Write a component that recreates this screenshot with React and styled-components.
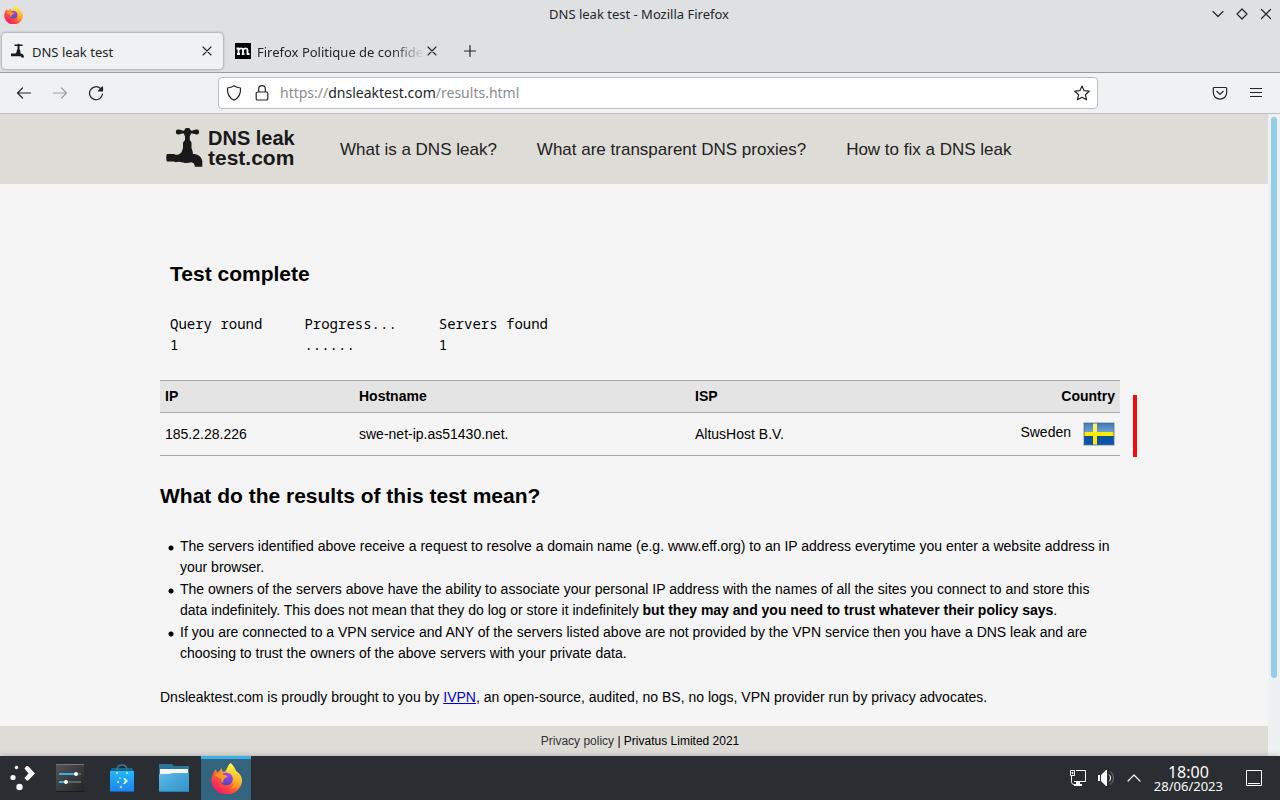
import React from "react";
import styled, { createGlobalStyle } from "styled-components";

const Global = createGlobalStyle`
  *, *::before, *::after { box-sizing: border-box; }
  html, body { margin: 0; padding: 0; }
  body { background: #f5f5f5; }
  button { font: inherit; color: inherit; background: none; border: 0; padding: 0; cursor: pointer; }
  svg { display: block; flex: none; }
`;

const Screen = styled.div`
  min-height: 100vh;
  display: flex;
  flex-direction: column;
  font-family: "Noto Sans", sans-serif;
  color: #232629;
`;

const TitleBar = styled.header`
  height: 29px;
  padding: 0 6px 1px 4px;
  display: grid;
  grid-template-columns: 1fr auto 1fr;
  align-items: center;
  background: #dee0e2;
  font-size: 13px;
`;

const WindowTitle = styled.span`
  line-height: 20px;
`;

const WindowControls = styled.div`
  display: flex;
  justify-content: flex-end;
  gap: 8px;
`;

const IconButton = styled.button`
  width: ${(p) => p.$size || 16}px;
  height: ${(p) => p.$size || 16}px;
  flex: none;
  display: flex;
  align-items: center;
  justify-content: center;
  opacity: ${(p) => (p.disabled ? 0.4 : 1)};
`;

const TabStrip = styled.div`
  height: 44px;
  padding: 4px 2px 3px;
  display: flex;
  align-items: stretch;
  gap: 4px;
  background: #dee0e2;
  border-bottom: 1px solid #9b9d9f;
`;

const Tab = styled.div`
  display: flex;
  align-items: center;
  width: 221px;
  padding: 0 8px;
  font-size: 13px;
  border-radius: 4px;
  background: ${(p) => (p.$active ? "#f0f1f3" : "transparent")};
  box-shadow: ${(p) => (p.$active ? "0 0 3px rgba(0, 0, 0, 0.45)" : "none")};
`;

const TabLabel = styled.span`
  flex: 1;
  min-width: 0;
  margin-left: 6px;
  padding-top: 2px;
  overflow: hidden;
  white-space: nowrap;
  line-height: 20px;
  mask-image: ${(p) => (p.$fade ? "linear-gradient(to left, transparent, #000 32px)" : "none")};
`;

const Toolbar = styled.div`
  height: 41px;
  padding: 4px 12px;
  display: flex;
  align-items: center;
  background: #f0f1f3;
  border-bottom: 1px solid #bfc0c1;
`;

const NavButtons = styled.div`
  display: flex;
  gap: 12px;
  width: 206px;
`;

const UrlBar = styled.div`
  flex: 1;
  height: 32px;
  display: flex;
  align-items: center;
  gap: 10px;
  padding: 0 7px;
  background: #fff;
  border: 1px solid #bbbdbf;
  border-radius: 4px;
`;

const SiteIdentity = styled.div`
  display: flex;
  gap: 12px;
`;

const UrlText = styled.span`
  flex: 1;
  font-size: 14px;
  line-height: 20px;
  color: #8b8d8f;
  b { font-weight: 400; color: #232629; }
`;

const ToolbarEnd = styled.div`
  width: 170px;
  display: flex;
  justify-content: flex-end;
  gap: 12px;
`;

const Page = styled.div`
  position: relative;
  flex: 1;
  display: flex;
  flex-direction: column;
  background: #f5f5f5;
  color: #000;
  font-family: "Liberation Sans", Arial, sans-serif;
  font-size: 14px;
  line-height: 21px;
`;

const ScrollTrack = styled.div`
  position: absolute;
  top: 0;
  right: 0;
  bottom: 0;
  width: 12px;
  padding: 3px 3px 78px;
  background: #eff0f2;
`;

const ScrollThumb = styled.div`
  height: 100%;
  border-radius: 3px;
  background: #93cee9;
`;

const SiteHeader = styled.header`
  background: #dddcd7;
`;

const Container = styled.div`
  width: 100%;
  max-width: 960px;
  margin: 0 auto;
`;

const SiteNav = styled(Container)`
  height: 70px;
  display: flex;
  align-items: center;
`;

const Logo = styled.a`
  width: 180px;
  padding: 0 0 2px 6px;
  display: flex;
  gap: 5px;
  color: #191919;
  font-weight: 700;
  text-decoration: none;
`;

const LogoText = styled.span`
  display: flex;
  flex-direction: column;
  line-height: 20px;
`;

const LogoLine = styled.span`
  font-size: ${(p) => p.$size}px;
`;

const NavLinks = styled.nav`
  display: flex;
  gap: 40px;
`;

const NavLink = styled.a`
  font-size: 17px;
  line-height: 26px;
  padding-top: 2px;
  color: #222;
  text-decoration: none;
`;

const Main = styled.main`
  flex: 1;
  padding: 76px 0 18px;
`;

const Heading = styled.h2`
  margin: 0;
  font-size: 21px;
  line-height: 28px;
`;

const SectionHeading = styled(Heading)`
  margin-top: 26px;
`;

const Progress = styled.section`
  padding: 0 10px;
`;

const ProgressTable = styled.table`
  margin: 25px 0;
  border-collapse: collapse;
  font-family: "Noto Sans Mono", "DejaVu Sans Mono", monospace;
  font-size: 14px;
  line-height: 21px;
  th, td { padding: 0 42px 0 0; font-weight: 400; text-align: left; }
`;

const ResultsWrap = styled.div`
  position: relative;
`;

const ResultMark = styled.div`
  position: absolute;
  top: 15px;
  bottom: -1px;
  right: -17px;
  width: 4px;
  background: #f40a0a;
`;

const Results = styled.table`
  width: 100%;
  table-layout: fixed;
  border-collapse: collapse;
  th, td { padding: 5px; text-align: left; border-bottom: 1px solid #a9a9a9; }
  th { height: 32px; background: #e4e4e4; border-top: 1px solid #a9a9a9; }
  td { height: 43px; }
  th:last-child { text-align: right; }
`;

const Col = styled.col`
  width: ${(p) => p.$width};
`;

const Country = styled.div`
  display: flex;
  justify-content: flex-end;
  align-items: center;
  gap: 12px;
  span { padding-bottom: 3px; }
`;

const Notes = styled.ul`
  margin: 26px 0 23px;
  padding: 0 10px 0 0;
  list-style: none;
`;

const Note = styled.li`
  padding-left: 20px;
  background: radial-gradient(circle at 11px 12px, #000 2px, transparent 3px) no-repeat;
  & + & { margin-top: 1px; }
`;

const Text = styled.p`
  margin: 0;
  a { color: #0000d8; }
`;

const SiteFooter = styled.footer`
  height: 30px;
  background: #dddcd7;
  font-size: 12px;
  line-height: 30px;
  text-align: center;
  a { color: #333; text-decoration: none; }
`;

const TaskBar = styled.footer`
  height: 44px;
  display: flex;
  align-items: stretch;
  justify-content: space-between;
  background: #2a2e32;
  color: #fcfcfc;
  box-shadow: 0 0 6px rgba(0, 0, 0, 0.25);
  z-index: 1;
`;

const Launchers = styled.div`
  display: flex;
  gap: 2px;
`;

const Launcher = styled.button`
  width: ${(p) => (p.$first ? 43 : 50)}px;
  display: flex;
  align-items: center;
  justify-content: center;
  background: ${(p) => (p.$active ? "#33657f" : "transparent")};
  box-shadow: ${(p) => (p.$active ? "inset 0 3px #3daee9" : "none")};
`;

const Tray = styled.div`
  display: flex;
  align-items: center;
  gap: 12px;
  padding-right: 18px;
`;

const Clock = styled.div`
  display: flex;
  flex-direction: column;
  align-items: center;
  margin-right: 11px;
  padding-top: 2px;
  line-height: 14px;
  font-size: 13px;
`;

const ClockTime = styled.time`
  font-size: 16px;
`;

const Stroke = ({ size = 16, w = 1.2, children }) => (
  <svg width={size} height={size} viewBox="0 0 16 16" fill="none" stroke="currentColor" strokeWidth={w} strokeLinecap="round" strokeLinejoin="round" aria-hidden="true">
    {children}
  </svg>
);

const Firefox = ({ size, id }) => (
  <svg width={size} height={size} viewBox="0 0 32 32" aria-hidden="true">
    <defs>
      <linearGradient id={id + "a"} x1="0.85" y1="0.1" x2="0.2" y2="0.95">
        <stop offset="0" stopColor="#fff44f" />
        <stop offset="0.35" stopColor="#ffb13b" />
        <stop offset="0.6" stopColor="#ff5a36" />
        <stop offset="1" stopColor="#f5156c" />
      </linearGradient>
      <radialGradient id={id + "b"} cx="0.6" cy="0.2" r="0.8">
        <stop offset="0" stopColor="#a545f2" />
        <stop offset="1" stopColor="#5247bd" />
      </radialGradient>
      <linearGradient id={id + "c"} x1="0.5" y1="0" x2="0.6" y2="1">
        <stop offset="0" stopColor="#fff44f" />
        <stop offset="1" stopColor="#ff980e" stopOpacity="0.6" />
      </linearGradient>
    </defs>
    <path d="M20 0C24 3 24.500 6 26 8.500C29.500 10.500 32 14 32 18C31.500 26 25 32.500 16.500 32.500C7.500 32.500 .5 26 .5 17.500C.5 13 2.500 9.500 5 6.500L6 9.500L8 9L11 5.500C11 7.500 12 9 13.500 9.500C16 8 17 3 20 0Z" fill={`url(#${id}a)`} />
    <path d="M20 0C24 3.500 25 7 27 10C30 13 31 17 29.500 21C28 25 24 27 20 27C24 24 24.500 17 21 13C18.500 11 17 10 16.500 8C17 5 18.500 2 20 0Z" fill={`url(#${id}c)`} />
    <circle cx="16" cy="16.500" r="6.500" fill={`url(#${id}b)`} />
    <path d="M4 13C6 11 8 10.500 10.500 11C12.500 12.500 15.500 12 17 13.500C16.500 15.500 14.500 15 13.500 16.500C12.500 18 12.500 19 13 20C10.500 20.500 10 17.500 10 16Z" fill="#ff9a1f" />
  </svg>
);

const Faucet = () => (
  <svg width="37" height="39" viewBox="0 0 37 39" fill="#191919" aria-hidden="true">
    <path d="M10 3C10.500 1.200 13.500 1.200 15.500 2.300C17 3 18 2.800 18.500 2C19 .3 20 0 21.500 0C23 0 24 .3 24.500 2C25 2.800 26 3 27.500 2.300C29.500 1.200 32.500 1.200 33 3C33.500 5 32.500 6.500 31 6.500C29 6.500 28 5 25 5.500C24.700 7 24 7.500 23.800 8.500V12L25.500 14.500V20L26.500 23L27 26C31.500 26 35.500 28.500 36.300 33V38.800H28.800C28.800 36 27.500 34.500 25 34.300C23 35.200 20 35.500 17 34.500L13 33.800L9.500 34.300L8 33.500H1C0 32.500 0 27 1 26H8L9.500 26.800C12.500 26.800 15 26 16 23L17 20V14.500L19 12V8.500C18.800 7.500 18.200 7 18 5.500C15 5 14 6.500 12 6.500C10.500 6.500 9.500 5 10 3Z" />
  </svg>
);

const FaucetFavicon = () => (
  <svg width="16" height="16" viewBox="0 0 16 16" fill="#191919" aria-hidden="true">
    <path d="M4.500 1.500H7.500C7.500 .5 9.500 .5 9.500 1.500H12.500V3H9.500V6L10.300 8L10.600 10.500C12.500 10.500 14 12 14 14.500H11.500C11.300 13.300 10.500 13 9 13.200H1V10.500H5.500C6.500 10.200 6.500 9 6.700 8L7.500 6V3H4.500Z" />
  </svg>
);

const SwedenFlag = () => (
  <svg width="32" height="24" viewBox="0 0 32 24" role="img" aria-label="Flag of Sweden">
    <defs>
      <linearGradient id="flagBlue" x1="0" y1="0" x2="0" y2="1">
        <stop offset="0" stopColor="#3f79b8" />
        <stop offset="0.45" stopColor="#7ba3ce" />
        <stop offset="0.5" stopColor="#0a4f9e" />
        <stop offset="1" stopColor="#0b55a8" />
      </linearGradient>
    </defs>
    <rect x="0" y="0" width="32" height="24" rx="1" fill="#bcc2cf" />
    <rect x="1" y="1" width="30" height="22" fill="url(#flagBlue)" />
    <path d="M10 1h4v22h-4zM1 10h30v4H1z" fill="#ffec00" />
    <path d="M10 1h4v9h-4z" fill="#fff27a" opacity="0.7" />
    <path d="M1.500 1.500h29v21h-29z" fill="none" stroke="#2f6cb2" strokeOpacity="0.5" />
  </svg>
);

const PlasmaIcon = () => (
  <svg width="26" height="26" viewBox="0 0 26 26" fill="#fff" aria-hidden="true">
    <circle cx="7.500" cy="2.500" r="1.700" />
    <circle cx="4" cy="12.500" r="2.600" />
    <circle cx="10.500" cy="22" r="3.200" />
    <path d="M15.500 3.500l2-2.500h1.500l7 7.500-7 7H17.500l-2-2.500 4-4.500z" />
  </svg>
);

const SettingsIcon = () => (
  <svg width="28" height="28" viewBox="0 0 28 28" aria-hidden="true">
    <defs>
      <linearGradient id="setBg" x1="0" y1="0" x2="1" y2="1">
        <stop offset="0" stopColor="#565656" />
        <stop offset="1" stopColor="#222426" />
      </linearGradient>
    </defs>
    <rect width="28" height="28" fill="url(#setBg)" />
    <path d="M0 0h28v1H0z" fill="#777" />
    <path d="M0 27h28v1H0z" fill="#1b1c1d" />
    <path d="M3 9h22v2H3zM3 17h22v2H3z" fill="#606162" />
    <path d="M3 9h16v2H3zM3 17h6v2H3z" fill="#3daee9" />
    <circle cx="20" cy="10" r="2" fill="#fff" />
    <circle cx="10" cy="18" r="2" fill="#fff" />
  </svg>
);

const DiscoverIcon = () => (
  <svg width="24" height="28" viewBox="0 0 24 28" aria-hidden="true">
    <defs>
      <linearGradient id="bag" x1="0" y1="0" x2="0" y2="1">
        <stop offset="0" stopColor="#20b8fb" />
        <stop offset="1" stopColor="#1f82f0" />
      </linearGradient>
    </defs>
    <path d="M0 7l2-3h20l2 3z" fill="#1d6685" />
    <path d="M7 9V6C7 2.500 9 1 12 1s5 1.500 5 5v3" fill="none" stroke="#2b7f9f" strokeWidth="1.500" />
    <path d="M0 7h24v21H0z" fill="url(#bag)" />
    <path d="M0 27h24v1H0z" fill="#175fae" />
    <circle cx="7" cy="9" r="1" fill="#c9efff" />
    <circle cx="17" cy="9" r="1" fill="#c9efff" />
    <path d="M13 14h2l3 3-3 3h-2l2-3z" fill="#d8f3ff" />
    <circle cx="10" cy="14" r="1" fill="#9fdcfb" />
    <circle cx="8" cy="18" r="1.200" fill="#9fdcfb" />
    <circle cx="11" cy="23" r="1.300" fill="#9fdcfb" />
  </svg>
);

const FolderIcon = () => (
  <svg width="30" height="28" viewBox="0 0 30 28" aria-hidden="true">
    <defs>
      <linearGradient id="folder" x1="0" y1="0" x2="1" y2="1">
        <stop offset="0" stopColor="#62bdec" />
        <stop offset="0.5" stopColor="#44a5d7" />
        <stop offset="1" stopColor="#3493c8" />
      </linearGradient>
    </defs>
    <path d="M0 0h13l2 2h15v12H0z" fill="#2a7899" />
    <path d="M1 5h28v6H1z" fill="#f6f7f8" />
    <path d="M0 10h11l2-1h17v19H0z" fill="url(#folder)" />
    <path d="M0 27h30v1H0z" fill="#2f7fa8" />
  </svg>
);

const NetworkIcon = () => (
  <svg width="16" height="16" viewBox="0 0 16 16" fill="none" stroke="currentColor" aria-hidden="true">
    <path d="M0.500 0.500h4v5h-4zM6 0.500h9.500v11H4M1.500 6v5.500c0 2 .5 2.500 2.500 3" />
    <path d="M2 2.500h1v1H2z" />
    <path d="M6 12h4v2H6zM4 14h8v2H4z" fill="currentColor" stroke="none" />
  </svg>
);

const VolumeIcon = () => (
  <svg width="16" height="16" viewBox="0 0 16 16" fill="none" aria-hidden="true">
    <path d="M0 5h2v6H0zM3 5l5-5h1v16H8l-5-5z" fill="#fff" />
    <path d="M11 4.500c2 1.500 2 5.500 0 7" stroke="#fff" />
    <path d="M12 1.500c4.500 2.500 4.500 10.500 0 13" stroke="#777a7d" />
  </svg>
);

const CloseTab = () => (
  <IconButton aria-label="Close tab">
    <Stroke size={16} w={1.1}><path d="M4 4l8 8M12 4l-8 8" /></Stroke>
  </IconButton>
);

export default function App() {
  return (
    <Screen>
      <Global />
      <TitleBar>
        <Firefox size={19} id="ffs" />
        <WindowTitle>DNS leak test - Mozilla Firefox</WindowTitle>
        <WindowControls>
          <IconButton aria-label="Minimize"><Stroke><path d="M3 5.500l5 5 5-5" /></Stroke></IconButton>
          <IconButton aria-label="Maximize"><Stroke><path d="M8 3l5 5-5 5-5-5z" /></Stroke></IconButton>
          <IconButton aria-label="Close"><Stroke><path d="M3.500 3.500l9 9M12.500 3.500l-9 9" /></Stroke></IconButton>
        </WindowControls>
      </TitleBar>

      <TabStrip>
        <Tab $active>
          <FaucetFavicon />
          <TabLabel>DNS leak test</TabLabel>
          <CloseTab />
        </Tab>
        <Tab>
          <svg width="16" height="16" viewBox="0 0 16 16" aria-hidden="true">
            <path d="M0 0h16v16H0z" fill="#000" />
            <path d="M1.500 5.500h2V11M2 11h3M3.500 7C5 4.500 8 5 8 7v4M6.800 11h2.600M8 7c1.500-2.500 4.500-2 4.500 0v4h2" fill="none" stroke="#fff" strokeWidth="1.800" />
          </svg>
          <TabLabel $fade>Firefox Politique de confidentialité</TabLabel>
          <CloseTab />
        </Tab>
        <IconButton $size={36} aria-label="New tab">
          <Stroke><path d="M8 2.500v11M2.500 8h11" /></Stroke>
        </IconButton>
      </TabStrip>

      <Toolbar>
        <NavButtons>
          <IconButton $size={24} aria-label="Back"><Stroke><path d="M14.500 8H1.500M6.500 3l-5 5 5 5" /></Stroke></IconButton>
          <IconButton $size={24} aria-label="Forward" disabled><Stroke><path d="M1.500 8h13M9.500 3l5 5-5 5" /></Stroke></IconButton>
          <IconButton $size={24} aria-label="Reload">
            <Stroke><path d="M12.500 3.500A6.500 6.500 0 1 0 14.500 9" /><path d="M14.500 2v4h-4z" fill="currentColor" /></Stroke>
          </IconButton>
        </NavButtons>
        <UrlBar>
          <SiteIdentity>
            <Stroke><path d="M8 0.800c2 1.400 4 2 6.500 2.200C15 9 12.500 13 8 15.200C3.500 13 1 9 1.500 3C4 2.800 6 2.200 8 0.800z" /></Stroke>
            <Stroke><path d="M3.500 7h9a1.300 1.300 0 0 1 1.300 1.300v5.400a1.300 1.300 0 0 1-1.300 1.300h-9a1.300 1.300 0 0 1-1.300-1.300V8.300A1.300 1.300 0 0 1 3.500 7zM4.700 7V4a3.300 3.300 0 0 1 6.600 0v3" /></Stroke>
          </SiteIdentity>
          <UrlText>https://<b>dnsleaktest.com</b>/results.html</UrlText>
          <IconButton aria-label="Bookmark this page">
            <Stroke><path d="M8 1l2.100 4.700 5.100.5-3.800 3.500 1.100 5.100L8 12.200l-4.500 2.600 1.100-5.100L.8 6.200l5.100-.5z" /></Stroke>
          </IconButton>
        </UrlBar>
        <ToolbarEnd>
          <IconButton $size={24} aria-label="Save to Pocket">
            <Stroke><path d="M2.200 2.500h11.600a.9.900 0 0 1 .9.900V7.500a6.700 6.700 0 0 1-13.400 0V3.400a.9.900 0 0 1 .9-.9zM4.800 6.300L8 9.400l3.200-3.100" /></Stroke>
          </IconButton>
          <IconButton $size={24} aria-label="Open application menu">
            <Stroke><path d="M2.500 3.500h11M2.500 7.500h11M2.500 11.500h11" /></Stroke>
          </IconButton>
        </ToolbarEnd>
      </Toolbar>

      <Page>
        <SiteHeader>
          <SiteNav>
            <Logo href="#home">
              <Faucet />
              <LogoText>
                <LogoLine $size={20}>DNS leak</LogoLine>
                <LogoLine $size={21}>test.com</LogoLine>
              </LogoText>
            </Logo>
            <NavLinks>
              <NavLink href="#what">What is a DNS leak?</NavLink>
              <NavLink href="#proxies">What are transparent DNS proxies?</NavLink>
              <NavLink href="#fix">How to fix a DNS leak</NavLink>
            </NavLinks>
          </SiteNav>
        </SiteHeader>

        <Main>
          <Container>
            <Progress>
              <Heading>Test complete</Heading>
              <ProgressTable>
                <thead><tr><th>Query round</th><th>Progress...</th><th>Servers found</th></tr></thead>
                <tbody><tr><td>1</td><td>......</td><td>1</td></tr></tbody>
              </ProgressTable>
            </Progress>
            <ResultsWrap>
              <Results>
                <colgroup><Col $width="194px" /><Col $width="336px" /><Col $width="auto" /><Col $width="160px" /></colgroup>
                <thead><tr><th>IP</th><th>Hostname</th><th>ISP</th><th>Country</th></tr></thead>
                <tbody>
                  <tr>
                    <td>185.2.28.226</td>
                    <td>swe-net-ip.as51430.net.</td>
                    <td>AltusHost B.V.</td>
                    <td><Country><span>Sweden</span><SwedenFlag /></Country></td>
                  </tr>
                </tbody>
              </Results>
              <ResultMark />
            </ResultsWrap>
            <SectionHeading>What do the results of this test mean?</SectionHeading>
            <Notes>
              <Note>The servers identified above receive a request to resolve a domain name (e.g. www.eff.org) to an IP address everytime you enter a website address in your browser.</Note>
              <Note>The owners of the servers above have the ability to associate your personal IP address with the names of all the sites you connect to and store this data indefinitely. This does not mean that they do log or store it indefinitely <strong>but they may and you need to trust whatever their policy says</strong>.</Note>
              <Note>If you are connected to a VPN service and ANY of the servers listed above are not provided by the VPN service then you have a DNS leak and are choosing to trust the owners of the above servers with your private data.</Note>
            </Notes>
            <Text>Dnsleaktest.com is proudly brought to you by <a href="#ivpn">IVPN</a>, an open-source, audited, no BS, no logs, VPN provider run by privacy advocates.</Text>
          </Container>
        </Main>
        <SiteFooter><a href="#privacy">Privacy policy</a> | Privatus Limited 2021</SiteFooter>
        <ScrollTrack><ScrollThumb /></ScrollTrack>
      </Page>

      <TaskBar>
        <Launchers>
          <Launcher $first aria-label="Application launcher"><PlasmaIcon /></Launcher>
          <Launcher aria-label="System settings"><SettingsIcon /></Launcher>
          <Launcher aria-label="Discover"><DiscoverIcon /></Launcher>
          <Launcher aria-label="Files"><FolderIcon /></Launcher>
          <Launcher $active aria-label="Firefox"><Firefox size={31} id="ffl" /></Launcher>
        </Launchers>
        <Tray>
          <IconButton aria-label="Network"><NetworkIcon /></IconButton>
          <IconButton aria-label="Volume"><VolumeIcon /></IconButton>
          <IconButton aria-label="Show hidden icons"><Stroke><path d="M2 11l6-6 6 6" /></Stroke></IconButton>
          <Clock><ClockTime>18:00</ClockTime><time>28/06/2023</time></Clock>
          <IconButton aria-label="Show desktop">
            <svg width="16" height="16" viewBox="0 0 16 16" fill="none" stroke="currentColor" aria-hidden="true"><path d="M0.500 0.500h15v15H0.500zM2 13.500h12" /></svg>
          </IconButton>
        </Tray>
      </TaskBar>
    </Screen>
  );
}
